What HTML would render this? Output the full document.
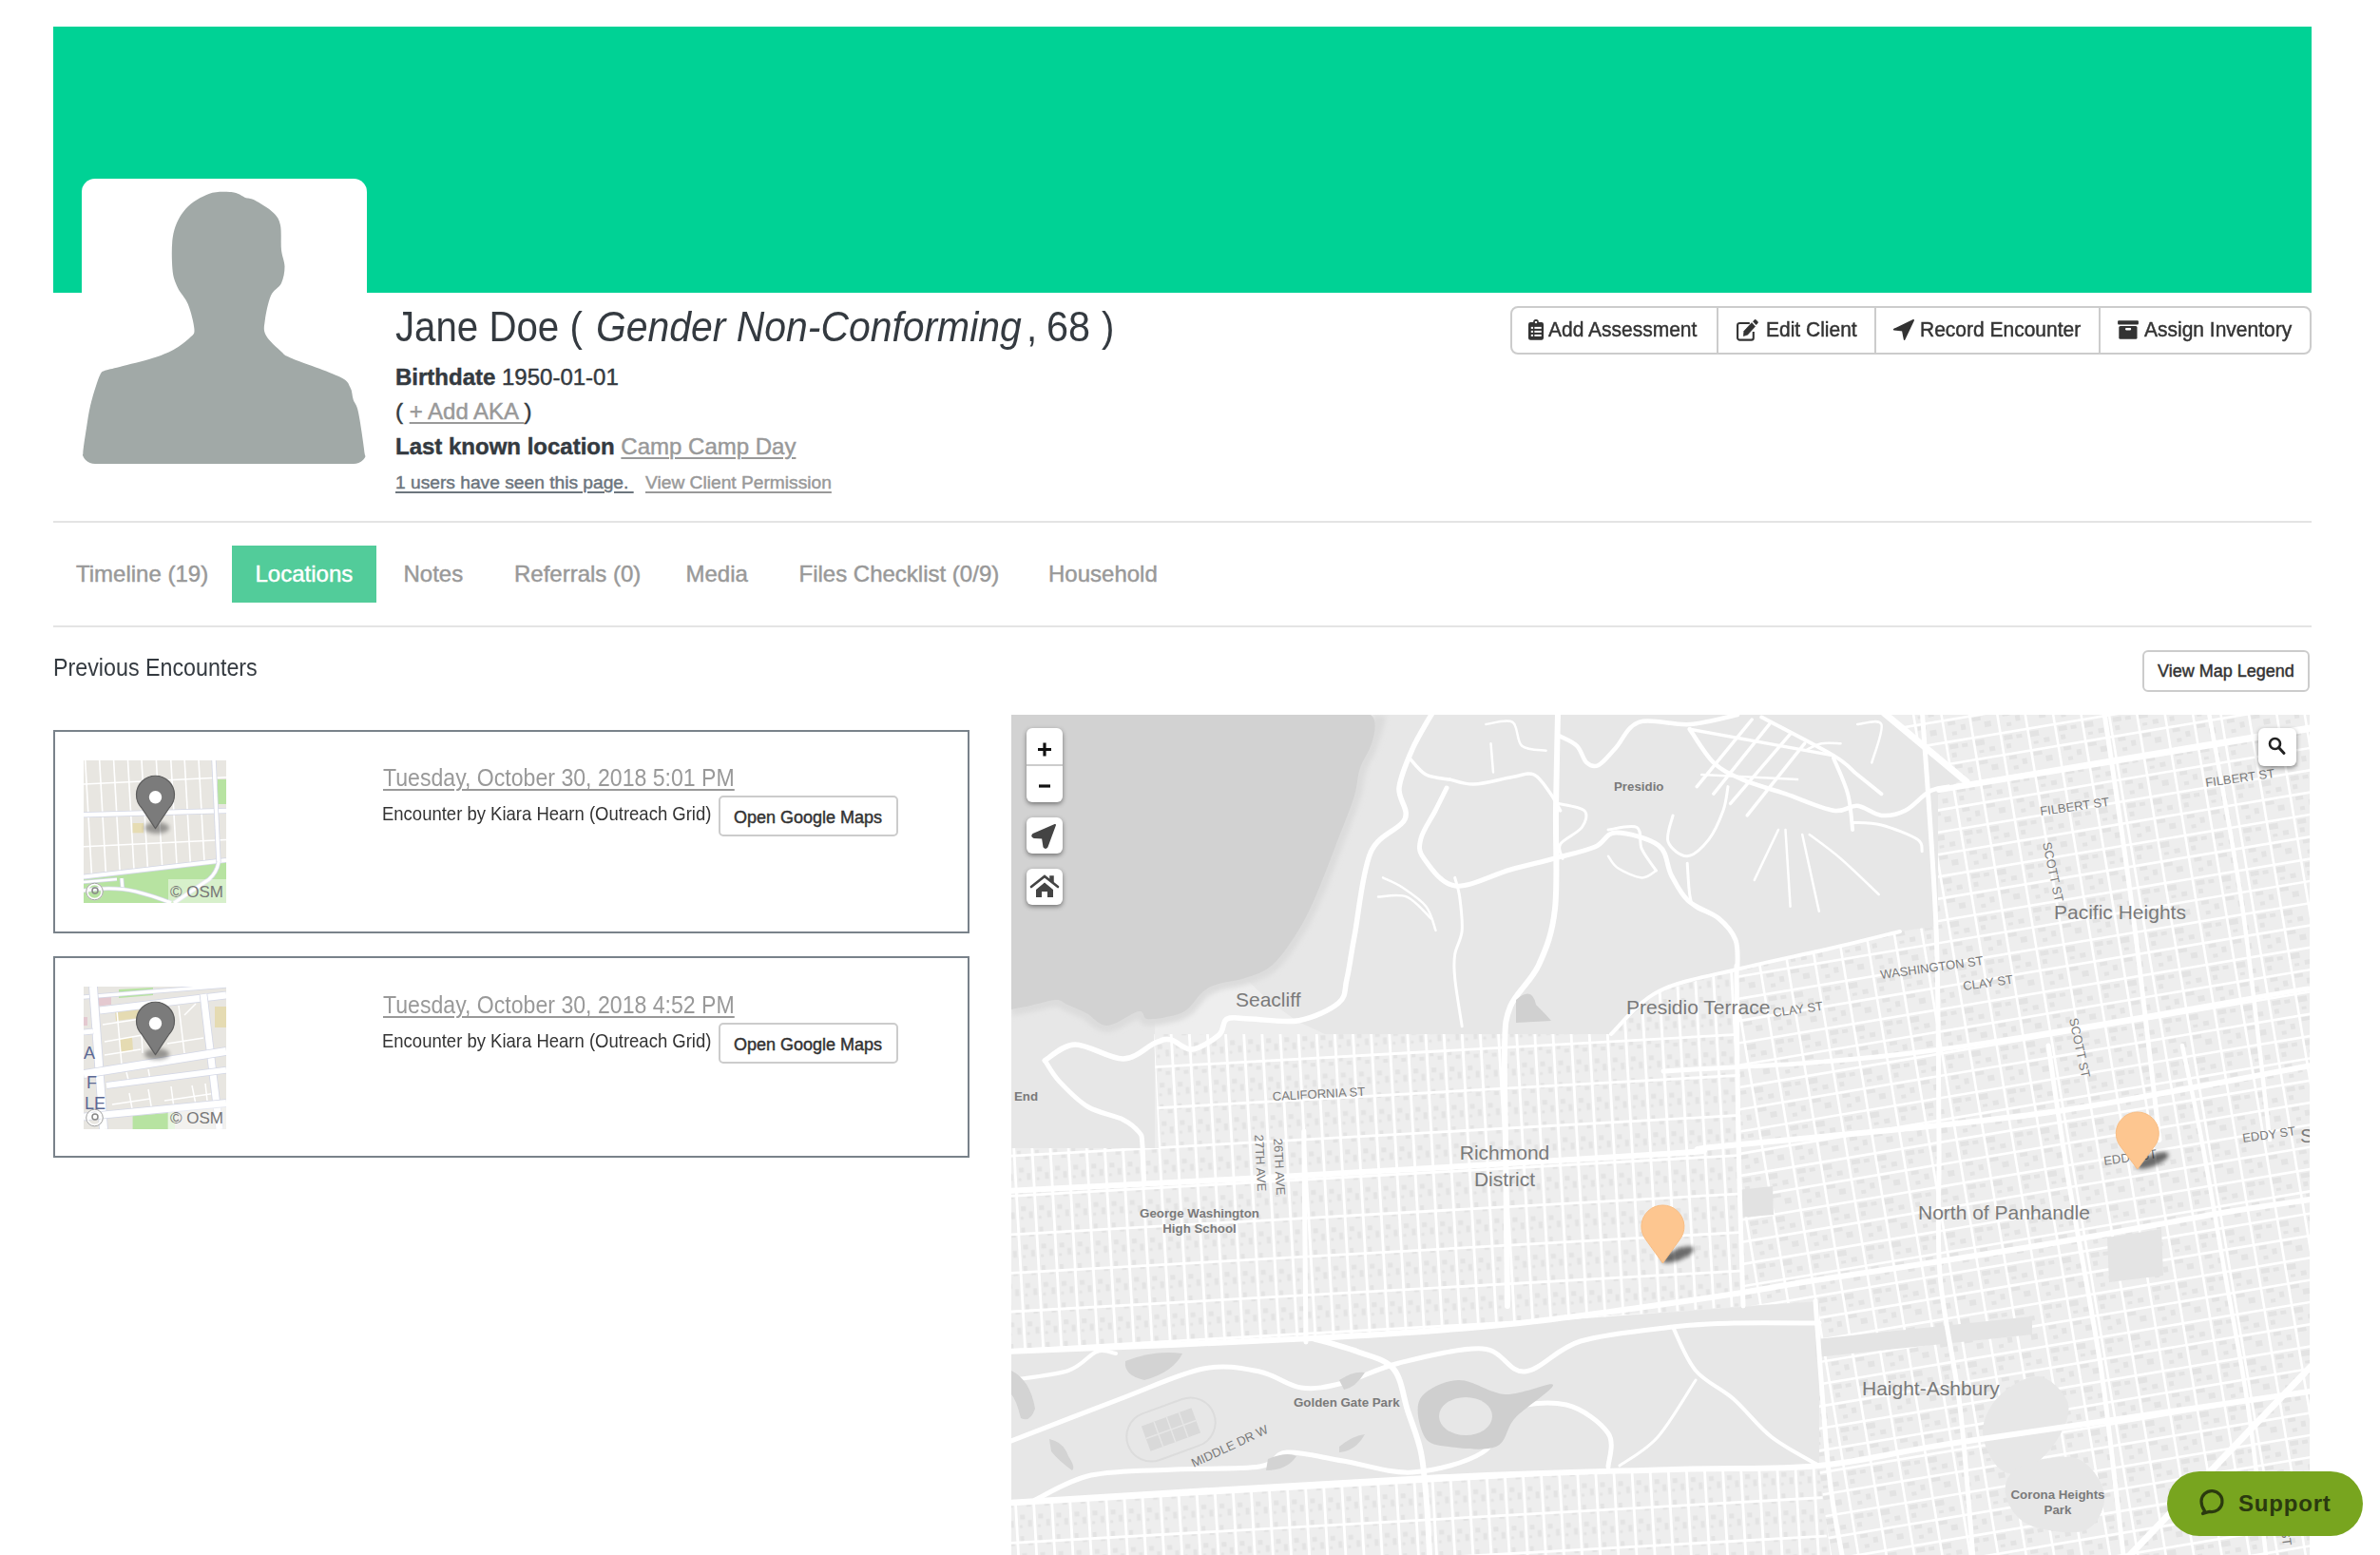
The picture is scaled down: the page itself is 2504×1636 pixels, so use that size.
<!DOCTYPE html>
<html><head><meta charset="utf-8"><style>
html,body{margin:0;padding:0;width:2504px;height:1636px;overflow:hidden;background:#fff;font-family:"Liberation Sans", sans-serif}
.a{position:absolute;box-sizing:content-box}
.t{position:absolute;white-space:nowrap}
.hv{-webkit-text-stroke:0.45px currentColor}
.ctl{background:#fff;border-radius:6px;box-shadow:0 2px 5px rgba(0,0,0,.45)}
svg text{font-family:"Liberation Sans", sans-serif}
u{text-decoration-thickness:2px;text-underline-offset:3px}
</style></head><body>
<div class="a" style="left:56px;top:28px;width:2376px;height:280px;background:#00d295"></div>
<div class="a" style="left:86px;top:188px;width:300px;height:300px;background:#fff;border-radius:14px;overflow:hidden"><svg width="300" height="300" style="display:block"><path d="M155.5,13.9 C160.7,13.9 162.2,15.0 165.0,16.0 C167.8,17.0 169.2,18.9 172.0,20.0 C174.8,21.1 176.9,20.0 181.8,22.6 C186.7,25.2 197.0,31.3 201.5,35.7 C206.0,40.1 207.6,42.5 209.0,49.0 C210.4,55.5 209.2,67.7 210.0,75.0 C210.8,82.3 213.5,86.8 213.5,92.6 C213.5,98.4 212.4,104.9 210.0,110.0 C207.6,115.1 201.9,116.4 199.0,123.0 C196.1,129.6 193.6,142.5 192.7,149.5 C191.8,156.5 190.9,159.4 193.8,164.8 C196.7,170.2 205.5,178.0 210.0,182.0 C214.5,186.0 210.8,184.6 221.0,189.0 C231.2,193.4 261.3,203.4 271.5,208.5 C281.7,213.6 280.0,215.5 282.4,219.5 C284.8,223.5 284.3,228.2 285.7,232.6 C287.1,237.0 289.0,236.2 291.0,245.7 C293.0,255.2 296.7,280.4 297.7,289.5 C298.7,298.6 321.6,298.2 297.0,300.0 C272.4,301.8 199.0,300.0 150.0,300.0 C101.0,300.0 27.8,301.8 3.0,300.0 C-21.8,298.2 1.0,295.8 1.3,289.5 C1.6,283.2 3.7,270.4 5.0,262.0 C6.3,253.6 7.3,246.3 9.0,239.0 C10.7,231.7 13.2,223.5 15.0,218.0 C16.8,212.5 18.0,208.7 19.5,206.0 C21.0,203.3 20.6,203.3 24.0,202.0 C27.4,200.7 31.6,200.2 40.0,198.0 C48.4,195.8 65.2,191.8 74.6,188.8 C84.0,185.8 89.9,183.6 96.5,180.0 C103.1,176.4 110.3,170.7 114.0,167.0 C117.7,163.3 118.8,163.8 118.4,158.0 C118.0,152.2 114.7,139.2 111.8,132.0 C108.9,124.8 103.6,120.7 100.9,114.5 C98.2,108.3 96.1,104.3 95.4,94.8 C94.7,85.3 94.1,68.2 96.5,57.6 C98.9,47.0 103.4,38.3 109.6,31.4 C115.8,24.5 126.0,18.9 133.7,16.0 C141.3,13.1 150.3,13.9 155.5,13.9 Z" fill="#a1a9a7"/></svg></div>
<div class="t " style="left:415.9px;top:323.1px;font-size:43.6px;line-height:43.6px;transform:scaleX(0.923);transform-origin:0 0;color:#343a40">Jane Doe (</div>
<div class="t " style="left:626.7px;top:323.1px;font-size:43.6px;line-height:43.6px;transform:scaleX(0.938);transform-origin:0 0;color:#343a40"><i>Gender Non-Conforming</i></div>
<div class="t " style="left:1080.3px;top:323.1px;font-size:43.6px;line-height:43.6px;transform:scaleX(0.92);transform-origin:0 0;color:#343a40">,</div>
<div class="t " style="left:1100.6px;top:323.1px;font-size:43.6px;line-height:43.6px;transform:scaleX(0.95);transform-origin:0 0;color:#343a40">68</div>
<div class="t " style="left:1158.8px;top:323.1px;font-size:43.6px;line-height:43.6px;transform:scaleX(0.92);transform-origin:0 0;color:#343a40">)</div>
<div class="t hv" style="left:416.0px;top:385.3px;font-size:24px;line-height:24px;color:#343a40"><b>Birthdate</b> 1950-01-01</div>
<div class="t hv" style="left:416.0px;top:420.7px;font-size:24px;line-height:24px;color:#343a40">( <u style="color:#999">+ Add AKA </u>)</div>
<div class="t hv" style="left:416.0px;top:457.7px;font-size:24px;line-height:24px;color:#343a40"><b>Last known location</b> <u style="color:#999">Camp Camp Day</u></div>
<div class="t hv" style="left:416.0px;top:498.3px;font-size:19.2px;line-height:19.2px;color:#6c757d"><u>1 users have seen this page.&nbsp;</u></div>
<div class="t hv" style="left:679.0px;top:498.3px;font-size:19.2px;line-height:19.2px;color:#999"><u>View Client Permission</u></div>
<div class="a" style="left:1589px;top:322px;width:839px;height:47px;border:2px solid #ccc;border-radius:8px"></div>
<div class="a" style="left:1806px;top:322px;width:2px;height:51px;background:#ccc"></div>
<div class="a" style="left:1972px;top:322px;width:2px;height:51px;background:#ccc"></div>
<div class="a" style="left:2208px;top:322px;width:2px;height:51px;background:#ccc"></div>
<div class="t hv" style="left:1629.0px;top:335.5px;font-size:21.8px;line-height:21.8px;transform:scaleX(0.963);transform-origin:0 0;color:#333">Add Assessment</div>
<div class="t hv" style="left:1857.5px;top:335.5px;font-size:21.8px;line-height:21.8px;transform:scaleX(0.963);transform-origin:0 0;color:#333">Edit Client</div>
<div class="t hv" style="left:2020.0px;top:335.5px;font-size:21.8px;line-height:21.8px;transform:scaleX(0.963);transform-origin:0 0;color:#333">Record Encounter</div>
<div class="t hv" style="left:2255.5px;top:335.5px;font-size:21.8px;line-height:21.8px;transform:scaleX(0.963);transform-origin:0 0;color:#333">Assign Inventory</div>
<svg class="a" style="left:1608px;top:336px" width="16" height="22" viewBox="0 0 16 22"><rect x="0" y="3" width="16" height="18.7" rx="2.2" fill="#333"/><rect x="5.2" y="0" width="5.6" height="6" rx="2.6" fill="#333"/><rect x="6.9" y="2" width="2.2" height="2.1" fill="#fff"/><g fill="#fff"><rect x="2.8" y="7.9" width="2.2" height="2"/><rect x="6.4" y="7.9" width="7.3" height="2"/><rect x="2.8" y="11.9" width="2.2" height="2"/><rect x="6.4" y="11.9" width="7.3" height="2"/><rect x="2.8" y="15.9" width="2.2" height="2"/><rect x="6.4" y="15.9" width="7.3" height="2"/></g></svg>
<svg class="a" style="left:1820px;top:328px" width="32" height="32" viewBox="0 0 32 32"><path d="M20.8,12 H10.4 A2.2,2.2 0 0 0 8.1,14.2 V27.4 A2.2,2.2 0 0 0 10.4,29.6 H22.6 A2.2,2.2 0 0 0 24.8,27.4 V21" fill="none" stroke="#333" stroke-width="2.1"/><polygon points="14.3,25.6 14.9,20.3 23.0,11.6 26.6,15.5 18.6,24.2" fill="#333" stroke="#333" stroke-width="0.6" stroke-linejoin="round"/><path d="M24.1,10.3 L26.0,8.3 Q26.8,7.6 27.6,8.4 L29.6,10.6 Q30.2,11.4 29.5,12.1 L27.6,14.1 Z" fill="#333"/></svg>
<svg class="a" style="left:1985px;top:328px" width="32" height="32" viewBox="0 0 32 32"><path d="M7.6,18.6 L28.2,8.8 L18.6,29.2 L16.8,19.8 Z" fill="#333" stroke="#333" stroke-width="1.6" stroke-linejoin="round"/></svg>
<svg class="a" style="left:2220px;top:328px" width="32" height="32" viewBox="0 0 32 32"><rect x="8.1" y="9.3" width="21.8" height="4.1" rx="1" fill="#333"/><rect x="9.3" y="15" width="19.2" height="13.7" rx="1.5" fill="#333"/><rect x="16" y="17.1" width="6.2" height="2.3" rx="1.1" fill="#fff"/></svg>
<div class="a" style="left:56px;top:548px;width:2376px;height:2px;background:#e4e4e4"></div>
<div class="a" style="left:56px;top:658px;width:2376px;height:2px;background:#e4e4e4"></div>
<div class="a" style="left:244px;top:574px;width:152px;height:60px;background:#52cc9a"></div>
<div class="t hv" style="left:80.0px;top:591.7px;font-size:24px;line-height:24px;color:#999">Timeline (19)</div>
<div class="t hv" style="left:268.5px;top:591.7px;font-size:24px;line-height:24px;color:#fff">Locations</div>
<div class="t hv" style="left:424.5px;top:591.7px;font-size:24px;line-height:24px;color:#999">Notes</div>
<div class="t hv" style="left:541.0px;top:591.7px;font-size:24px;line-height:24px;color:#999">Referrals (0)</div>
<div class="t hv" style="left:721.5px;top:591.7px;font-size:24px;line-height:24px;color:#999">Media</div>
<div class="t hv" style="left:840.5px;top:591.7px;font-size:24px;line-height:24px;color:#999">Files Checklist (0/9)</div>
<div class="t hv" style="left:1103.0px;top:591.7px;font-size:24px;line-height:24px;color:#999">Household</div>
<div class="t " style="left:56.3px;top:690.3px;font-size:25.3px;line-height:25.3px;transform:scaleX(0.92);transform-origin:0 0;color:#343a40">Previous Encounters</div>
<div class="a" style="left:2254px;top:684px;width:172px;height:40px;border:2px solid #ccc;border-radius:6px"></div>
<div class="t hv" style="left:2270.0px;top:696.8px;font-size:18px;line-height:18px;color:#333">View Map Legend</div>
<div class="a" style="left:56px;top:768px;width:960px;height:210px;border:2px solid #79828a"></div>
<div class="a" style="left:88px;top:800px;width:150px;height:150px;overflow:hidden;background:#e6e4e0"><svg width="150" height="150" viewBox="0 0 150 150" style="display:block"><defs><filter id="tb" x="-50%" y="-50%" width="200%" height="200%"><feGaussianBlur stdDeviation="2"/></filter></defs><rect width="150" height="150" fill="#e8e6e1"/><polygon points="0,125 150,107 150,150 0,150" fill="#b7e3a1"/><rect x="141" y="20" width="9" height="26" fill="#b7e3a1"/><line x1="1.7" y1="0" x2="8.6" y2="122.4" stroke="#fff" stroke-width="1.6"/><line x1="16.7" y1="0" x2="23.5" y2="120.6" stroke="#fff" stroke-width="1.6"/><line x1="31.6" y1="0" x2="38.3" y2="118.9" stroke="#fff" stroke-width="1.6"/><line x1="46.5" y1="0" x2="53.1" y2="117.1" stroke="#fff" stroke-width="1.6"/><line x1="61" y1="0" x2="67.5" y2="115.4" stroke="#fff" stroke-width="1.6"/><line x1="76.4" y1="0" x2="82.8" y2="113.6" stroke="#fff" stroke-width="1.6"/><line x1="91.8" y1="0" x2="98.1" y2="111.8" stroke="#fff" stroke-width="1.6"/><line x1="106.2" y1="0" x2="112.4" y2="110.1" stroke="#fff" stroke-width="1.6"/><line x1="121" y1="0" x2="127.1" y2="108.4" stroke="#fff" stroke-width="1.6"/><line x1="0" y1="25" x2="150" y2="17.7" stroke="#fff" stroke-width="1.6"/><line x1="0" y1="90.7" x2="150" y2="83.5" stroke="#fff" stroke-width="1.6"/><path d="M0,57.3 L150,53" fill="none" stroke="#d3d7e6" stroke-width="6.0" stroke-linecap="butt"/><path d="M0,57.3 L150,53" fill="none" stroke="#fff" stroke-width="4.4" stroke-linecap="butt"/><path d="M0,122.6 L150,105" fill="none" stroke="#d3d7e6" stroke-width="5.6" stroke-linecap="butt"/><path d="M0,122.6 L150,105" fill="none" stroke="#fff" stroke-width="4" stroke-linecap="butt"/><path d="M137,0 L142,107" fill="none" stroke="#d3d7e6" stroke-width="5.2" stroke-linecap="butt"/><path d="M137,0 L142,107" fill="none" stroke="#fff" stroke-width="3.6" stroke-linecap="butt"/><path d="M142,107 Q140,118 132,125 L95,150" fill="none" stroke="#d3d7e6" stroke-width="4.800000000000001" stroke-linecap="butt"/><path d="M142,107 Q140,118 132,125 L95,150" fill="none" stroke="#fff" stroke-width="3.2" stroke-linecap="butt"/><path d="M0,128 L35,125" fill="none" stroke="#d3d7e6" stroke-width="4.1" stroke-linecap="butt"/><path d="M0,128 L35,125" fill="none" stroke="#fff" stroke-width="2.5" stroke-linecap="butt"/><path d="M40,124 L41,136" fill="none" stroke="#d3d7e6" stroke-width="4.6" stroke-linecap="butt"/><path d="M40,124 L41,136" fill="none" stroke="#fff" stroke-width="3" stroke-linecap="butt"/><path d="M0,137 Q30,132 55,138 Q75,143 92,150" fill="none" stroke="#d3d7e6" stroke-width="4.6" stroke-linecap="butt"/><path d="M0,137 Q30,132 55,138 Q75,143 92,150" fill="none" stroke="#fff" stroke-width="3" stroke-linecap="butt"/><rect x="51.6" y="66" width="11.4" height="10.3" fill="#e6dcb3"/><ellipse cx="77" cy="71" rx="13" ry="6" fill="#000" opacity="0.35" filter="url(#tb)"/><path d="M75.5,71.7 L61,50 A20,20 0 1 1 90,50 Z" fill="#7b7b7b" stroke="#5c5c5c" stroke-width="1.2" stroke-linejoin="round"/><circle cx="75.5" cy="38.8" r="6.7" fill="#fff"/><rect x="89" y="125" width="61" height="25" fill="#fff" opacity="0.45"/><text x="91" y="143.5" font-size="17" fill="#777" font-family="Liberation Sans, sans-serif">© OSM</text><circle cx="11.5" cy="138" r="8" fill="none" stroke="#fff" stroke-width="2.5"/><circle cx="11.5" cy="138" r="8.8" fill="none" stroke="#888" stroke-width="0.8"/><circle cx="12" cy="137" r="3" fill="none" stroke="#888" stroke-width="1.5"/></svg></div>
<div class="t " style="left:403.0px;top:806.2px;font-size:25.3px;line-height:25.3px;transform:scaleX(0.913);transform-origin:0 0;color:#999"><u>Tuesday, October 30, 2018 5:01 PM</u></div>
<div class="t " style="left:402.1px;top:847.0px;font-size:19.8px;line-height:19.8px;transform:scaleX(0.935);transform-origin:0 0;color:#333">Encounter by Kiara Hearn (Outreach Grid)</div>
<div class="a" style="left:756px;top:836.6px;width:185px;height:39px;border:2px solid #ccc;border-radius:5px"></div>
<div class="t hv" style="left:772.0px;top:850.8px;font-size:18px;line-height:18px;color:#333">Open Google Maps</div>
<div class="a" style="left:56px;top:1006px;width:960px;height:208px;border:2px solid #79828a"></div>
<div class="a" style="left:88px;top:1038px;width:150px;height:150px;overflow:hidden;background:#e6e4e0"><svg width="150" height="150" viewBox="0 0 150 150" style="display:block"><defs><filter id="tb2" x="-50%" y="-50%" width="200%" height="200%"><feGaussianBlur stdDeviation="2"/></filter></defs><rect width="150" height="150" fill="#e8e6e1"/><polygon points="9.5,9 29,7 29,19 11,21" fill="#e4c9d0"/><rect x="0" y="32" width="4" height="9" fill="#e4c9d0"/><polygon points="37,3 73,1 73,9 37,12" fill="#b7e3a1"/><polygon points="33,25 58,21 58,33 34,36" fill="#e5dbb2"/><polygon points="38,55 51,53 52,67 39,69" fill="#e5dbb2"/><rect x="138" y="21" width="12" height="22" fill="#e5dbb2"/><polygon points="51.6,136 88.7,133 88.7,150 51.6,150" fill="#b7e3a1"/><polygon points="88.7,133 96,132 96,150 88.7,150" fill="#d4efc6"/><line x1="20" y1="40" x2="60" y2="34" stroke="#fff" stroke-width="1.5"/><line x1="22" y1="58" x2="62" y2="51" stroke="#fff" stroke-width="1.5"/><line x1="22" y1="72" x2="60" y2="66" stroke="#fff" stroke-width="1.5"/><line x1="35" y1="25" x2="40" y2="82" stroke="#fff" stroke-width="1.5"/><line x1="60" y1="30" x2="62" y2="70" stroke="#fff" stroke-width="1.5"/><line x1="100" y1="20" x2="106" y2="70" stroke="#fff" stroke-width="1.5"/><line x1="88" y1="60" x2="126" y2="54" stroke="#fff" stroke-width="1.5"/><line x1="100" y1="96" x2="128" y2="92" stroke="#fff" stroke-width="1.5"/><line x1="45" y1="90" x2="48" y2="102" stroke="#fff" stroke-width="1.5"/><line x1="68" y1="87" x2="70" y2="98" stroke="#fff" stroke-width="1.5"/><line x1="85" y1="120" x2="140" y2="112" stroke="#fff" stroke-width="1.5"/><line x1="30" y1="124" x2="70" y2="118" stroke="#fff" stroke-width="1.5"/><line x1="48" y1="112" x2="52" y2="134" stroke="#fff" stroke-width="1.5"/><line x1="68" y1="108" x2="72" y2="131" stroke="#fff" stroke-width="1.5"/><line x1="92" y1="105" x2="95" y2="128" stroke="#fff" stroke-width="1.5"/><line x1="114" y1="104" x2="118" y2="124" stroke="#fff" stroke-width="1.5"/><line x1="128" y1="102" x2="130" y2="120" stroke="#fff" stroke-width="1.5"/><line x1="106" y1="30" x2="118" y2="18" stroke="#fff" stroke-width="1.5"/><path d="M0,11 L150,-1" fill="none" stroke="#d3d7e6" stroke-width="5.1" stroke-linecap="butt"/><path d="M0,11 L150,-1" fill="none" stroke="#fff" stroke-width="3.5" stroke-linecap="butt"/><path d="M17,25 L124.7,12 L150,9" fill="none" stroke="#d3d7e6" stroke-width="8.6" stroke-linecap="butt"/><path d="M17,25 L124.7,12 L150,9" fill="none" stroke="#fff" stroke-width="7" stroke-linecap="butt"/><path d="M10,0 L21,150" fill="none" stroke="#d3d7e6" stroke-width="9.6" stroke-linecap="butt"/><path d="M10,0 L21,150" fill="none" stroke="#fff" stroke-width="8" stroke-linecap="butt"/><path d="M126,8 L143,150" fill="none" stroke="#d3d7e6" stroke-width="8.6" stroke-linecap="butt"/><path d="M126,8 L143,150" fill="none" stroke="#fff" stroke-width="7" stroke-linecap="butt"/><path d="M0,92 L150,68" fill="none" stroke="#d3d7e6" stroke-width="9.6" stroke-linecap="butt"/><path d="M0,92 L150,68" fill="none" stroke="#fff" stroke-width="8" stroke-linecap="butt"/><path d="M24,104 L150,87.7" fill="none" stroke="#d3d7e6" stroke-width="7.6" stroke-linecap="butt"/><path d="M24,104 L150,87.7" fill="none" stroke="#fff" stroke-width="6" stroke-linecap="butt"/><path d="M0,137 L150,122.6" fill="none" stroke="#d3d7e6" stroke-width="8.6" stroke-linecap="butt"/><path d="M0,137 L150,122.6" fill="none" stroke="#fff" stroke-width="7" stroke-linecap="butt"/><path d="M0,48 L10,47" fill="none" stroke="#d3d7e6" stroke-width="6.6" stroke-linecap="butt"/><path d="M0,48 L10,47" fill="none" stroke="#fff" stroke-width="5" stroke-linecap="butt"/><text x="0" y="76" font-size="18" fill="#5b6894" font-family="Liberation Sans, sans-serif">A</text><text x="3" y="107" font-size="18" fill="#5b6894" font-family="Liberation Sans, sans-serif">F</text><text x="1" y="129" font-size="18" fill="#5b6894" font-family="Liberation Sans, sans-serif">LE</text><ellipse cx="77" cy="71" rx="13" ry="6" fill="#000" opacity="0.35" filter="url(#tb2)"/><path d="M75.5,71.7 L61,50 A20,20 0 1 1 90,50 Z" fill="#7b7b7b" stroke="#5c5c5c" stroke-width="1.2" stroke-linejoin="round"/><circle cx="75.5" cy="38.8" r="6.7" fill="#fff"/><rect x="89" y="125" width="61" height="25" fill="#fff" opacity="0.45"/><text x="91" y="143.5" font-size="17" fill="#777" font-family="Liberation Sans, sans-serif">© OSM</text><circle cx="11.5" cy="138" r="8" fill="none" stroke="#fff" stroke-width="2.5"/><circle cx="11.5" cy="138" r="8.8" fill="none" stroke="#888" stroke-width="0.8"/><circle cx="12" cy="137" r="3" fill="none" stroke="#888" stroke-width="1.5"/></svg></div>
<div class="t " style="left:403.0px;top:1045.1px;font-size:25.3px;line-height:25.3px;transform:scaleX(0.913);transform-origin:0 0;color:#999"><u>Tuesday, October 30, 2018 4:52 PM</u></div>
<div class="t " style="left:402.1px;top:1085.9px;font-size:19.8px;line-height:19.8px;transform:scaleX(0.935);transform-origin:0 0;color:#333">Encounter by Kiara Hearn (Outreach Grid)</div>
<div class="a" style="left:756px;top:1075.5px;width:185px;height:39px;border:2px solid #ccc;border-radius:5px"></div>
<div class="t hv" style="left:772.0px;top:1089.7px;font-size:18px;line-height:18px;color:#333">Open Google Maps</div>
<svg class="a" style="left:1064px;top:752px" width="1366" height="884" viewBox="0 0 1366 884">
<defs>
<clipPath id="cA"><polygon points="150.0,336.0 631.0,336.0 681.0,291.0 765.0,268.0 770.0,622.0 525.0,641.0 317.0,656.0 -4.0,670.0 0.0,671.0 0.0,456.0 155.0,456.0"/><polygon points="0.0,828.0 437.0,802.0 720.0,794.0 850.0,790.0 860.0,884.0 0.0,884.0"/></clipPath>
<clipPath id="cB"><polygon points="765.0,268.0 861.0,246.0 935.0,228.0 975.0,222.0 975.0,84.0 1001.0,68.0 924.0,0.0 1366.0,0.0 1366.0,884.0 862.0,884.0 850.0,792.0 850.0,617.0 770.0,622.0"/></clipPath>
<filter id="sh" x="-50%" y="-50%" width="200%" height="200%"><feGaussianBlur stdDeviation="2.2"/></filter>
<filter id="cb" x="-10%" y="-10%" width="120%" height="120%"><feGaussianBlur stdDeviation="2.5"/></filter>
<pattern id="pA" patternUnits="userSpaceOnUse" width="19.1" height="40.5" patternTransform="translate(307.8,438) rotate(-3.2)">
<rect x="3" y="4" width="4" height="6" fill="#e3e3e3"/>
<rect x="11" y="10" width="5" height="4" fill="#e3e3e3"/>
<rect x="4" y="22" width="5" height="5" fill="#e3e3e3"/>
<rect x="12" y="28" width="4" height="7" fill="#e3e3e3"/>
<rect x="3" y="33" width="3" height="3" fill="#e3e3e3"/>
</pattern>
<pattern id="pB" patternUnits="userSpaceOnUse" width="58" height="46" patternTransform="translate(1071,201) rotate(-9.5)">
<rect x="3" y="3" width="9" height="5" fill="#e3e3e3"/>
<rect x="16" y="4" width="6" height="4" fill="#e3e3e3"/>
<rect x="4" y="12" width="5" height="5" fill="#e3e3e3"/>
<rect x="30" y="3" width="10" height="6" fill="#e3e3e3"/>
<rect x="44" y="12" width="6" height="5" fill="#e3e3e3"/>
<rect x="33" y="14" width="5" height="3" fill="#e3e3e3"/>
<rect x="5" y="25" width="8" height="4" fill="#e3e3e3"/>
<rect x="18" y="30" width="5" height="6" fill="#e3e3e3"/>
<rect x="31" y="25" width="9" height="4" fill="#e3e3e3"/>
<rect x="43" y="31" width="7" height="6" fill="#e3e3e3"/>
<rect x="8" y="36" width="5" height="4" fill="#e3e3e3"/>
</pattern>
</defs>
<rect width="1366" height="884" fill="#eeeeee"/>
<rect width="1366" height="884" fill="url(#pA)" clip-path="url(#cA)"/>
<rect width="1366" height="884" fill="url(#pB)" clip-path="url(#cB)"/>
<polygon points="918.0,0.0 1000.0,68.0 975.0,84.0 975.0,222.0 935.0,228.0 861.0,246.0 767.0,267.0 681.0,291.0 631.0,336.0 330.0,336.0 300.0,322.0 270.0,300.0 246.0,277.0 275.0,263.0 302.0,227.0 321.0,189.0 343.0,133.0 360.7,86.0 366.6,57.0 378.0,33.0 388.0,0.0" fill="#e7e7e7"/>
<polygon points="0.0,300.0 151.0,300.0 151.0,456.0 0.0,456.0" fill="#e7e7e7"/>
<polygon points="0.0,672.0 317.0,656.0 525.0,641.0 850.0,617.0 850.0,792.0 437.0,803.0 0.0,829.0" fill="#e7e7e7"/>
<g clip-path="url(#cA)"><g transform="translate(307.8,438) rotate(-3.2)" stroke="#ffffff" stroke-width="2.8">
<line x1="-382.0" y1="-300" x2="-382.0" y2="700"/>
<line x1="-362.9" y1="-300" x2="-362.9" y2="700"/>
<line x1="-343.8" y1="-300" x2="-343.8" y2="700"/>
<line x1="-324.7" y1="-300" x2="-324.7" y2="700"/>
<line x1="-305.6" y1="-300" x2="-305.6" y2="700"/>
<line x1="-286.5" y1="-300" x2="-286.5" y2="700"/>
<line x1="-267.4" y1="-300" x2="-267.4" y2="700"/>
<line x1="-248.3" y1="-300" x2="-248.3" y2="700"/>
<line x1="-229.2" y1="-300" x2="-229.2" y2="700"/>
<line x1="-210.1" y1="-300" x2="-210.1" y2="700"/>
<line x1="-191.0" y1="-300" x2="-191.0" y2="700"/>
<line x1="-171.9" y1="-300" x2="-171.9" y2="700"/>
<line x1="-152.8" y1="-300" x2="-152.8" y2="700"/>
<line x1="-133.7" y1="-300" x2="-133.7" y2="700"/>
<line x1="-114.6" y1="-300" x2="-114.6" y2="700"/>
<line x1="-95.5" y1="-300" x2="-95.5" y2="700"/>
<line x1="-76.4" y1="-300" x2="-76.4" y2="700"/>
<line x1="-57.3" y1="-300" x2="-57.3" y2="700"/>
<line x1="-38.2" y1="-300" x2="-38.2" y2="700"/>
<line x1="-19.1" y1="-300" x2="-19.1" y2="700"/>
<line x1="0.0" y1="-300" x2="0.0" y2="700"/>
<line x1="19.1" y1="-300" x2="19.1" y2="700"/>
<line x1="38.2" y1="-300" x2="38.2" y2="700"/>
<line x1="57.3" y1="-300" x2="57.3" y2="700"/>
<line x1="76.4" y1="-300" x2="76.4" y2="700"/>
<line x1="95.5" y1="-300" x2="95.5" y2="700"/>
<line x1="114.6" y1="-300" x2="114.6" y2="700"/>
<line x1="133.7" y1="-300" x2="133.7" y2="700"/>
<line x1="152.8" y1="-300" x2="152.8" y2="700"/>
<line x1="171.9" y1="-300" x2="171.9" y2="700"/>
<line x1="191.0" y1="-300" x2="191.0" y2="700"/>
<line x1="210.1" y1="-300" x2="210.1" y2="700"/>
<line x1="229.2" y1="-300" x2="229.2" y2="700"/>
<line x1="248.3" y1="-300" x2="248.3" y2="700"/>
<line x1="267.4" y1="-300" x2="267.4" y2="700"/>
<line x1="286.5" y1="-300" x2="286.5" y2="700"/>
<line x1="305.6" y1="-300" x2="305.6" y2="700"/>
<line x1="324.7" y1="-300" x2="324.7" y2="700"/>
<line x1="343.8" y1="-300" x2="343.8" y2="700"/>
<line x1="362.9" y1="-300" x2="362.9" y2="700"/>
<line x1="382.0" y1="-300" x2="382.0" y2="700"/>
<line x1="401.1" y1="-300" x2="401.1" y2="700"/>
<line x1="420.2" y1="-300" x2="420.2" y2="700"/>
<line x1="439.3" y1="-300" x2="439.3" y2="700"/>
<line x1="458.4" y1="-300" x2="458.4" y2="700"/>
<line x1="477.5" y1="-300" x2="477.5" y2="700"/>
<line x1="496.6" y1="-300" x2="496.6" y2="700"/>
<line x1="515.7" y1="-300" x2="515.7" y2="700"/>
<line x1="534.8" y1="-300" x2="534.8" y2="700"/>
<line x1="553.9" y1="-300" x2="553.9" y2="700"/>
<line x1="-500" y1="-76.0" x2="900" y2="-76.0"/>
<line x1="-500" y1="-33.0" x2="900" y2="-33.0"/>
<line x1="-500" y1="9.0" x2="900" y2="9.0"/>
<line x1="-500" y1="51.0" x2="900" y2="51.0"/>
<line x1="-500" y1="91.5" x2="900" y2="91.5"/>
<line x1="-500" y1="132.0" x2="900" y2="132.0"/>
<line x1="-500" y1="172.5" x2="900" y2="172.5"/>
<line x1="-500" y1="213.0" x2="900" y2="213.0"/>
<line x1="-500" y1="253.5" x2="900" y2="253.5"/>
<line x1="-500" y1="294.0" x2="900" y2="294.0"/>
<line x1="-500" y1="334.5" x2="900" y2="334.5"/>
<line x1="-500" y1="375.0" x2="900" y2="375.0"/>
<line x1="-500" y1="415.5" x2="900" y2="415.5"/>
<line x1="-500" y1="456.0" x2="900" y2="456.0"/>
<line x1="-500" y1="496.5" x2="900" y2="496.5"/>
</g></g>
<g clip-path="url(#cB)"><g transform="translate(1071,201) rotate(-9.5)" stroke="#ffffff" stroke-width="2.6">
<line x1="-406.0" y1="-500" x2="-406.0" y2="900"/>
<line x1="-377.0" y1="-500" x2="-377.0" y2="900"/>
<line x1="-348.0" y1="-500" x2="-348.0" y2="900"/>
<line x1="-319.0" y1="-500" x2="-319.0" y2="900"/>
<line x1="-290.0" y1="-500" x2="-290.0" y2="900"/>
<line x1="-261.0" y1="-500" x2="-261.0" y2="900"/>
<line x1="-232.0" y1="-500" x2="-232.0" y2="900"/>
<line x1="-203.0" y1="-500" x2="-203.0" y2="900"/>
<line x1="-174.0" y1="-500" x2="-174.0" y2="900"/>
<line x1="-145.0" y1="-500" x2="-145.0" y2="900"/>
<line x1="-116.0" y1="-500" x2="-116.0" y2="900"/>
<line x1="-87.0" y1="-500" x2="-87.0" y2="900"/>
<line x1="-58.0" y1="-500" x2="-58.0" y2="900"/>
<line x1="-29.0" y1="-500" x2="-29.0" y2="900"/>
<line x1="0.0" y1="-500" x2="0.0" y2="900"/>
<line x1="29.0" y1="-500" x2="29.0" y2="900"/>
<line x1="58.0" y1="-500" x2="58.0" y2="900"/>
<line x1="87.0" y1="-500" x2="87.0" y2="900"/>
<line x1="116.0" y1="-500" x2="116.0" y2="900"/>
<line x1="145.0" y1="-500" x2="145.0" y2="900"/>
<line x1="174.0" y1="-500" x2="174.0" y2="900"/>
<line x1="203.0" y1="-500" x2="203.0" y2="900"/>
<line x1="232.0" y1="-500" x2="232.0" y2="900"/>
<line x1="261.0" y1="-500" x2="261.0" y2="900"/>
<line x1="290.0" y1="-500" x2="290.0" y2="900"/>
<line x1="319.0" y1="-500" x2="319.0" y2="900"/>
<line x1="348.0" y1="-500" x2="348.0" y2="900"/>
<line x1="377.0" y1="-500" x2="377.0" y2="900"/>
<line x1="-600" y1="-368.0" x2="700" y2="-368.0"/>
<line x1="-600" y1="-345.0" x2="700" y2="-345.0"/>
<line x1="-600" y1="-322.0" x2="700" y2="-322.0"/>
<line x1="-600" y1="-299.0" x2="700" y2="-299.0"/>
<line x1="-600" y1="-276.0" x2="700" y2="-276.0"/>
<line x1="-600" y1="-253.0" x2="700" y2="-253.0"/>
<line x1="-600" y1="-230.0" x2="700" y2="-230.0"/>
<line x1="-600" y1="-207.0" x2="700" y2="-207.0"/>
<line x1="-600" y1="-184.0" x2="700" y2="-184.0"/>
<line x1="-600" y1="-161.0" x2="700" y2="-161.0"/>
<line x1="-600" y1="-138.0" x2="700" y2="-138.0"/>
<line x1="-600" y1="-115.0" x2="700" y2="-115.0"/>
<line x1="-600" y1="-92.0" x2="700" y2="-92.0"/>
<line x1="-600" y1="-69.0" x2="700" y2="-69.0"/>
<line x1="-600" y1="-46.0" x2="700" y2="-46.0"/>
<line x1="-600" y1="-23.0" x2="700" y2="-23.0"/>
<line x1="-600" y1="0.0" x2="700" y2="0.0"/>
<line x1="-600" y1="23.0" x2="700" y2="23.0"/>
<line x1="-600" y1="46.0" x2="700" y2="46.0"/>
<line x1="-600" y1="69.0" x2="700" y2="69.0"/>
<line x1="-600" y1="92.0" x2="700" y2="92.0"/>
<line x1="-600" y1="115.0" x2="700" y2="115.0"/>
<line x1="-600" y1="138.0" x2="700" y2="138.0"/>
<line x1="-600" y1="161.0" x2="700" y2="161.0"/>
<line x1="-600" y1="184.0" x2="700" y2="184.0"/>
<line x1="-600" y1="207.0" x2="700" y2="207.0"/>
<line x1="-600" y1="230.0" x2="700" y2="230.0"/>
<line x1="-600" y1="253.0" x2="700" y2="253.0"/>
<line x1="-600" y1="276.0" x2="700" y2="276.0"/>
<line x1="-600" y1="299.0" x2="700" y2="299.0"/>
<line x1="-600" y1="322.0" x2="700" y2="322.0"/>
<line x1="-600" y1="345.0" x2="700" y2="345.0"/>
<line x1="-600" y1="368.0" x2="700" y2="368.0"/>
<line x1="-600" y1="391.0" x2="700" y2="391.0"/>
<line x1="-600" y1="414.0" x2="700" y2="414.0"/>
<line x1="-600" y1="437.0" x2="700" y2="437.0"/>
<line x1="-600" y1="460.0" x2="700" y2="460.0"/>
<line x1="-600" y1="483.0" x2="700" y2="483.0"/>
<line x1="-600" y1="506.0" x2="700" y2="506.0"/>
<line x1="-600" y1="529.0" x2="700" y2="529.0"/>
<line x1="-600" y1="552.0" x2="700" y2="552.0"/>
<line x1="-600" y1="575.0" x2="700" y2="575.0"/>
<line x1="-600" y1="598.0" x2="700" y2="598.0"/>
<line x1="-600" y1="621.0" x2="700" y2="621.0"/>
<line x1="-600" y1="644.0" x2="700" y2="644.0"/>
<line x1="-600" y1="667.0" x2="700" y2="667.0"/>
<line x1="-600" y1="690.0" x2="700" y2="690.0"/>
<line x1="-600" y1="713.0" x2="700" y2="713.0"/>
<line x1="-600" y1="736.0" x2="700" y2="736.0"/>
<line x1="-600" y1="759.0" x2="700" y2="759.0"/>
<line x1="-600" y1="782.0" x2="700" y2="782.0"/>
<line x1="-600" y1="805.0" x2="700" y2="805.0"/>
</g></g>
<path d="M1080.6,696.0 C1092.7,697.1 1108.2,712.8 1111.6,723.7 C1115.0,734.6 1108.4,749.6 1101.0,761.6 C1093.6,773.6 1077.3,790.8 1067.0,796.0 C1056.7,801.2 1046.5,799.5 1039.0,792.6 C1031.5,785.7 1022.0,767.3 1022.0,754.7 C1022.0,742.1 1029.2,726.8 1039.0,717.0 C1048.8,707.2 1068.5,694.9 1080.6,696.0 Z" fill="#e7e7e7"/>
<path d="M1060.0,792.0 C1072.3,785.7 1105.0,777.3 1120.0,782.0 C1135.0,786.7 1148.3,807.3 1150.0,820.0 C1151.7,832.7 1143.3,852.7 1130.0,858.0 C1116.7,863.3 1084.0,858.3 1070.0,852.0 C1056.0,845.7 1047.7,830.0 1046.0,820.0 C1044.3,810.0 1047.7,798.3 1060.0,792.0 Z" fill="#e7e7e7"/>
<polygon points="846,657 1074,633 1074,652 846,676" fill="#e4e4e4"/>
<polygon points="1153,550 1210,541 1212,590 1155,597" fill="#e4e4e4"/>
<polygon points="764,500 801,496 802,526 765,529" fill="#e2e2e2"/>
<path d="M388.0,0.0 C386.3,5.5 381.6,23.5 378.0,33.0 C374.4,42.5 369.5,48.2 366.6,57.0 C363.7,65.8 364.6,73.3 360.7,86.0 C356.8,98.7 349.6,115.8 343.0,133.0 C336.4,150.2 327.8,173.3 321.0,189.0 C314.2,204.7 309.7,214.7 302.0,227.0 C294.3,239.3 284.3,254.7 275.0,263.0 C265.7,271.3 255.4,273.7 246.0,277.0 C236.6,280.3 225.8,280.7 218.5,283.0 C211.2,285.3 207.6,286.5 202.0,291.0 C196.4,295.5 190.7,305.7 185.0,310.0 C179.3,314.3 175.0,315.3 168.0,317.0 C161.0,318.7 148.7,320.8 143.0,320.0 C137.3,319.2 141.0,310.8 134.0,312.0 C127.0,313.2 110.2,326.7 101.0,327.0 C91.8,327.3 86.0,317.7 79.0,314.0 C72.0,310.3 64.3,307.3 59.0,305.0 C53.7,302.7 53.5,299.8 47.0,300.0 C40.5,300.2 27.8,304.3 20.0,306.0 C12.2,307.7 3.3,309.3 0.0,310.0" fill="none" stroke="#dcdcdc" stroke-width="14" filter="url(#cb)"/>
<path d="M0,0 L378,0 C386.3,5.5 381.6,23.5 378.0,33.0 C374.4,42.5 369.5,48.2 366.6,57.0 C363.7,65.8 364.6,73.3 360.7,86.0 C356.8,98.7 349.6,115.8 343.0,133.0 C336.4,150.2 327.8,173.3 321.0,189.0 C314.2,204.7 309.7,214.7 302.0,227.0 C294.3,239.3 284.3,254.7 275.0,263.0 C265.7,271.3 255.4,273.7 246.0,277.0 C236.6,280.3 225.8,280.7 218.5,283.0 C211.2,285.3 207.6,286.5 202.0,291.0 C196.4,295.5 190.7,305.7 185.0,310.0 C179.3,314.3 175.0,315.3 168.0,317.0 C161.0,318.7 148.7,320.8 143.0,320.0 C137.3,319.2 141.0,310.8 134.0,312.0 C127.0,313.2 110.2,326.7 101.0,327.0 C91.8,327.3 86.0,317.7 79.0,314.0 C72.0,310.3 64.3,307.3 59.0,305.0 C53.7,302.7 53.5,299.8 47.0,300.0 C40.5,300.2 27.8,304.3 20.0,306.0 C12.2,307.7 3.3,309.3 0.0,310.0 L0,310 Z" fill="#d2d2d2"/>
<path d="M35.3,363.7 C40.6,360.9 53.5,347.2 67.2,346.9 C80.9,346.6 103.6,362.3 117.6,362.0 C131.6,361.7 142.9,348.6 151.3,345.2 C159.7,341.8 161.6,340.8 168.0,341.9 C174.4,343.0 181.6,352.9 190.0,352.0 C198.4,351.1 212.3,342.1 218.5,336.8 C224.7,331.5 221.4,322.8 227.0,320.0 C232.6,317.2 239.4,319.7 252.0,320.0 C264.6,320.3 287.1,324.5 302.5,321.7 C317.9,318.9 336.1,310.3 344.5,303.0 C352.9,295.7 350.2,289.7 353.0,278.0 C355.8,266.3 356.8,255.2 361.0,233.0 C365.2,210.8 369.2,165.5 378.0,145.0 C386.8,124.5 409.0,121.3 414.0,110.0 C419.0,98.7 406.7,89.3 408.0,77.0 C409.3,64.7 416.2,49.2 422.0,36.0 C427.8,22.8 439.5,4.3 443.0,-2.0" fill="none" stroke="#ffffff" stroke-width="5.5" stroke-linecap="round" stroke-linejoin="round"/>
<path d="M458.0,77.0 C456.0,81.0 450.5,92.2 446.0,101.0 C441.5,109.8 433.0,121.7 431.0,130.0 C429.0,138.3 428.0,142.7 434.0,151.0 C440.0,159.3 451.8,178.0 467.0,180.0 C482.2,182.0 507.5,167.8 525.0,163.0 C542.5,158.2 557.2,155.0 572.0,151.0 C586.8,147.0 603.3,143.5 614.0,139.0 C624.7,134.5 624.8,124.2 636.0,124.0 C647.2,123.8 671.2,130.0 681.0,137.5 C690.8,145.0 689.2,159.2 694.5,169.0 C699.8,178.8 704.2,188.5 712.5,196.0 C720.8,203.5 735.8,207.2 744.0,214.0 C752.2,220.8 758.7,228.3 762.0,237.0 C765.3,245.7 763.7,261.2 764.0,266.0" fill="none" stroke="#ffffff" stroke-width="5" stroke-linecap="round" stroke-linejoin="round"/>
<path d="M631.0,336.0 C639.3,328.5 658.3,302.5 681.0,291.0 C703.7,279.5 737.0,274.5 767.0,267.0 C797.0,259.5 833.0,252.5 861.0,246.0 C889.0,239.5 922.7,231.0 935.0,228.0" fill="none" stroke="#ffffff" stroke-width="4" stroke-linecap="round" stroke-linejoin="round"/>
<path d="M575.0,-2.0 C574.7,15.0 573.5,65.7 573.0,100.0 C572.5,134.3 575.0,176.8 572.0,204.0 C569.0,231.2 562.8,245.8 555.0,263.0 C547.2,280.2 531.0,292.3 525.0,307.0 C519.0,321.7 519.8,327.2 519.0,351.0 C518.2,374.8 519.5,404.8 520.0,450.0 C520.5,495.2 521.7,593.3 522.0,622.0" fill="none" stroke="#ffffff" stroke-width="6" stroke-linecap="round" stroke-linejoin="round"/>
<path d="M461.6,68.1 C465.8,68.9 475.9,73.5 486.8,73.1 C497.7,72.7 516.7,67.2 527.2,65.5 C537.7,63.8 543.2,60.0 549.9,63.0 C556.6,66.0 562.9,76.9 567.5,83.2 C572.1,89.5 575.9,97.9 577.6,100.8" fill="none" stroke="#ffffff" stroke-width="3.5" stroke-linecap="round" stroke-linejoin="round"/>
<path d="M418.8,45.4 C421.7,48.3 429.3,59.2 436.4,63.0 C443.5,66.8 457.4,67.2 461.6,68.1" fill="none" stroke="#ffffff" stroke-width="3.5" stroke-linecap="round" stroke-linejoin="round"/>
<path d="M577.6,22.7 C580.5,24.4 590.6,28.2 595.2,32.8 C599.8,37.4 601.5,47.0 605.3,50.4 C609.1,53.8 612.8,55.4 617.9,52.9 C623.0,50.4 628.5,42.8 635.6,35.3 C642.8,27.7 647.8,11.8 660.8,7.6 C673.8,3.4 696.5,11.4 713.7,10.1 C730.9,8.8 755.7,1.7 764.1,0.0" fill="none" stroke="#ffffff" stroke-width="4.5" stroke-linecap="round" stroke-linejoin="round"/>
<path d="M575.1,93.3 C579.7,94.5 598.6,96.6 602.8,100.8 C607.0,105.0 604.5,112.6 600.3,118.5 C596.1,124.4 581.0,130.7 577.6,136.1 C574.2,141.5 579.7,148.7 580.1,151.2" fill="none" stroke="#ffffff" stroke-width="3" stroke-linecap="round" stroke-linejoin="round"/>
<path d="M466.7,171.4 C467.5,174.8 470.4,182.3 471.7,191.6 C472.9,200.8 475.0,216.8 474.2,226.9 C473.4,237.0 467.9,243.7 466.7,252.1 C465.4,260.5 465.4,264.7 466.7,277.3 C467.9,289.9 472.9,319.3 474.2,327.7" fill="none" stroke="#ffffff" stroke-width="3" stroke-linecap="round" stroke-linejoin="round"/>
<path d="M628.0,121.0 C633.0,120.6 652.3,115.1 658.2,118.5 C664.1,121.9 659.9,133.6 663.3,141.2 C666.7,148.8 675.9,160.1 678.4,163.9" fill="none" stroke="#ffffff" stroke-width="3" stroke-linecap="round" stroke-linejoin="round"/>
<path d="M628.0,148.7 C629.7,150.8 632.2,157.5 638.1,161.3 C644.0,165.1 656.6,171.0 663.3,171.4 C670.0,171.8 675.9,165.2 678.4,163.9" fill="none" stroke="#ffffff" stroke-width="2.5" stroke-linecap="round" stroke-linejoin="round"/>
<path d="M713.7,15.1 C717.9,21.0 729.6,41.6 738.9,50.4 C748.1,59.2 756.6,62.6 769.2,68.1 C781.8,73.6 798.5,77.8 814.5,83.2 C830.5,88.7 852.4,98.7 865.0,100.8 C877.6,102.9 881.8,94.9 890.2,95.8 C898.6,96.7 907.0,105.1 915.4,105.9 C923.8,106.7 932.2,105.0 940.6,100.8 C949.0,96.6 958.2,84.9 965.8,80.7 C973.3,76.5 982.5,76.4 985.9,75.6" fill="none" stroke="#ffffff" stroke-width="4.5" stroke-linecap="round" stroke-linejoin="round"/>
<path d="M721.3,75.6 L779.2,5.0" fill="none" stroke="#ffffff" stroke-width="3.5" stroke-linecap="round" stroke-linejoin="round"/>
<path d="M738.9,83.2 L799.4,7.6" fill="none" stroke="#ffffff" stroke-width="3.5" stroke-linecap="round" stroke-linejoin="round"/>
<path d="M756.6,93.3 L819.6,20.2" fill="none" stroke="#ffffff" stroke-width="3.5" stroke-linecap="round" stroke-linejoin="round"/>
<path d="M774.2,105.9 L834.7,30.2" fill="none" stroke="#ffffff" stroke-width="3.5" stroke-linecap="round" stroke-linejoin="round"/>
<path d="M713.7,15.1 L865.0,42.9" fill="none" stroke="#ffffff" stroke-width="3.5" stroke-linecap="round" stroke-linejoin="round"/>
<path d="M726.3,63.0 L827.1,68.1" fill="none" stroke="#ffffff" stroke-width="2.5" stroke-linecap="round" stroke-linejoin="round"/>
<path d="M789.3,2.5 C801.9,9.2 848.2,32.8 865.0,42.9 C881.8,53.0 881.8,56.3 890.2,63.0 C898.6,69.7 911.2,79.8 915.4,83.2" fill="none" stroke="#ffffff" stroke-width="4" stroke-linecap="round" stroke-linejoin="round"/>
<path d="M696.1,105.9 C695.2,110.5 688.5,126.5 691.0,133.6 C693.5,140.7 704.1,149.1 711.2,148.7 C718.4,148.3 727.6,139.1 733.9,131.1 C740.2,123.1 745.6,110.0 749.0,100.8 C752.4,91.5 753.2,79.8 754.0,75.6" fill="none" stroke="#ffffff" stroke-width="3" stroke-linecap="round" stroke-linejoin="round"/>
<path d="M711.2,156.3 C711.6,161.8 712.5,181.5 713.7,189.1 C715.0,196.7 715.3,198.3 718.7,201.7 C722.1,205.0 731.4,207.9 733.9,209.2" fill="none" stroke="#ffffff" stroke-width="3" stroke-linecap="round" stroke-linejoin="round"/>
<path d="M807.0,121.0 L781.8,173.9" fill="none" stroke="#ffffff" stroke-width="2.5" stroke-linecap="round" stroke-linejoin="round"/>
<path d="M814.5,121.0 L819.6,201.7" fill="none" stroke="#ffffff" stroke-width="2.5" stroke-linecap="round" stroke-linejoin="round"/>
<path d="M832.2,126.0 L849.8,206.7" fill="none" stroke="#ffffff" stroke-width="2.5" stroke-linecap="round" stroke-linejoin="round"/>
<path d="M839.7,126.0 C845.2,130.2 860.3,140.7 872.5,151.2 C884.7,161.7 906.1,182.8 912.8,189.1" fill="none" stroke="#ffffff" stroke-width="2.5" stroke-linecap="round" stroke-linejoin="round"/>
<path d="M885.1,113.4 C890.1,113.8 904.0,113.0 915.4,116.0 C926.8,119.0 946.1,126.5 953.2,131.1 C960.3,135.7 957.4,141.6 958.2,143.7" fill="none" stroke="#ffffff" stroke-width="3" stroke-linecap="round" stroke-linejoin="round"/>
<path d="M865.0,45.4 C867.5,51.7 876.8,70.6 880.1,83.2 C883.5,95.8 884.3,114.7 885.1,121.0" fill="none" stroke="#ffffff" stroke-width="4" stroke-linecap="round" stroke-linejoin="round"/>
<path d="M834.7,37.8 C837.6,36.5 846.0,31.5 852.3,30.2 C858.6,28.9 869.1,30.2 872.5,30.2" fill="none" stroke="#ffffff" stroke-width="2.5" stroke-linecap="round" stroke-linejoin="round"/>
<path d="M890.2,10.1 C894.4,10.1 912.9,3.4 915.4,10.1 C917.9,16.8 907.0,43.7 905.3,50.4" fill="none" stroke="#ffffff" stroke-width="2.5" stroke-linecap="round" stroke-linejoin="round"/>
<path d="M499.4,10.1 C504.0,9.7 520.9,3.8 527.2,7.6 C533.5,11.4 531.3,27.8 537.2,32.8 C543.1,37.8 558.3,37.0 562.5,37.8" fill="none" stroke="#ffffff" stroke-width="2.5" stroke-linecap="round" stroke-linejoin="round"/>
<path d="M504.5,30.2 L507.0,60.5" fill="none" stroke="#ffffff" stroke-width="2.5" stroke-linecap="round" stroke-linejoin="round"/>
<path d="M391.0,171.4 C394.4,173.1 403.6,176.4 411.2,181.5 C418.8,186.6 430.5,194.1 436.4,201.7 C442.3,209.3 444.8,222.7 446.5,226.9" fill="none" stroke="#ffffff" stroke-width="2.5" stroke-linecap="round" stroke-linejoin="round"/>
<path d="M386.0,191.6 C391.0,191.6 406.9,187.8 416.2,191.6 C425.4,195.4 437.3,210.5 441.5,214.3" fill="none" stroke="#ffffff" stroke-width="2.5" stroke-linecap="round" stroke-linejoin="round"/>
<path d="M-4.0,501.0 C46.7,498.3 183.3,491.6 300.0,485.0 C416.7,478.4 623.3,466.5 696.0,461.5 C768.7,456.5 692.6,459.6 736.0,455.0 C779.4,450.4 895.8,440.3 956.6,434.0 C1017.4,427.7 1053.9,423.8 1101.0,417.0 C1148.1,410.2 1194.7,401.0 1239.0,393.0 C1283.3,385.0 1345.7,373.0 1367.0,369.0" fill="none" stroke="#ffffff" stroke-width="6" stroke-linecap="round" stroke-linejoin="round"/>
<path d="M-4.0,670.0 C49.5,667.7 228.8,660.8 317.0,656.0 C405.2,651.2 455.2,648.2 525.0,641.0 C594.8,633.8 683.7,620.5 736.0,613.0 C788.3,605.5 798.8,602.3 839.0,596.0 C879.2,589.7 929.3,582.5 977.0,575.0 C1024.7,567.5 1075.5,559.5 1125.0,551.0 C1174.5,542.5 1233.7,530.8 1274.0,524.0 C1314.3,517.2 1351.5,512.3 1367.0,510.0" fill="none" stroke="#ffffff" stroke-width="6" stroke-linecap="round" stroke-linejoin="round"/>
<path d="M-4.0,829.0 C69.5,824.7 320.3,808.8 437.0,803.0 C553.7,797.2 627.2,796.2 696.0,794.0 C764.8,791.8 799.3,794.8 850.0,790.0 C900.7,785.2 914.0,778.0 1000.0,765.0 C1086.0,752.0 1305.0,720.8 1366.0,712.0" fill="none" stroke="#ffffff" stroke-width="6" stroke-linecap="round" stroke-linejoin="round"/>
<path d="M686.0,375.0 C731.4,371.6 845.4,369.1 958.5,354.6 C1071.6,340.1 1296.8,299.1 1364.5,288.0" fill="none" stroke="#ffffff" stroke-width="5" stroke-linecap="round" stroke-linejoin="round"/>
<path d="M976.0,79.0 L1364.5,15.4" fill="none" stroke="#ffffff" stroke-width="6" stroke-linecap="round" stroke-linejoin="round"/>
<path d="M918.0,-2.0 L1005.0,70.5" fill="none" stroke="#ffffff" stroke-width="7" stroke-linecap="round" stroke-linejoin="round"/>
<path d="M958.5,-2.0 C960.9,35.7 970.1,149.2 973.0,224.0 C975.9,298.8 975.3,386.2 976.0,447.0 C976.7,507.8 973.3,542.3 977.0,589.0 C980.7,635.7 992.2,677.8 998.0,727.0 C1003.8,776.2 1009.4,857.8 1011.7,884.0" fill="none" stroke="#ffffff" stroke-width="5" stroke-linecap="round" stroke-linejoin="round"/>
<path d="M1150.0,-2.0 C1154.8,31.8 1169.3,126.1 1179.0,201.0 C1188.7,275.9 1203.2,406.3 1208.0,447.4" fill="none" stroke="#ffffff" stroke-width="5" stroke-linecap="round" stroke-linejoin="round"/>
<path d="M1091.0,348.0 C1094.4,371.0 1104.1,440.0 1111.6,486.0 C1119.1,532.0 1129.5,586.7 1135.8,624.0 C1142.1,661.3 1143.9,666.7 1149.6,710.0 C1155.3,753.3 1166.6,855.0 1170.0,884.0" fill="none" stroke="#ffffff" stroke-width="5" stroke-linecap="round" stroke-linejoin="round"/>
<path d="M1260.0,-2.0 C1265.8,31.8 1284.3,126.2 1295.0,201.0 C1305.7,275.8 1319.2,406.0 1324.0,447.0" fill="none" stroke="#ffffff" stroke-width="4.5" stroke-linecap="round" stroke-linejoin="round"/>
<path d="M1232.0,348.0 C1235.5,365.2 1245.5,410.8 1253.0,451.0 C1260.5,491.2 1269.0,543.0 1277.0,589.0 C1285.0,635.0 1293.8,677.8 1301.0,727.0 C1308.2,776.2 1316.8,857.8 1320.0,884.0" fill="none" stroke="#ffffff" stroke-width="4.5" stroke-linecap="round" stroke-linejoin="round"/>
<path d="M846.0,617.0 C848.3,646.8 855.3,751.5 860.0,796.0 C864.7,840.5 871.7,869.3 874.0,884.0" fill="none" stroke="#ffffff" stroke-width="5" stroke-linecap="round" stroke-linejoin="round"/>
<path d="M1367.0,686.0 L1177.0,884.0" fill="none" stroke="#ffffff" stroke-width="7" stroke-linecap="round" stroke-linejoin="round"/>
<path d="M763.0,264.0 C763.3,295.0 763.8,390.3 765.0,450.0 C766.2,509.7 769.2,593.3 770.0,622.0" fill="none" stroke="#ffffff" stroke-width="5" stroke-linecap="round" stroke-linejoin="round"/>
<path d="M307.8,438.0 L310.0,660.0" fill="none" stroke="#ffffff" stroke-width="5" stroke-linecap="round" stroke-linejoin="round"/>
<path d="M0.0,764.0 C19.0,756.7 80.3,732.7 114.0,720.0 C147.7,707.3 177.5,692.8 202.0,688.0 C226.5,683.2 243.8,687.7 261.0,691.0 C278.2,694.3 290.3,706.0 305.0,708.0 C319.7,710.0 331.8,707.3 349.0,703.0 C366.2,698.7 383.5,688.0 408.0,682.0 C432.5,676.0 474.0,665.5 496.0,667.0 C518.0,668.5 522.8,692.3 540.0,691.0 C557.2,689.7 573.0,666.8 599.0,659.0 C625.0,651.2 669.2,647.2 696.0,644.0 C722.8,640.8 734.3,640.7 760.0,640.0 C785.7,639.3 835.0,640.0 850.0,640.0" fill="none" stroke="#ffffff" stroke-width="5" stroke-linecap="round" stroke-linejoin="round"/>
<path d="M25.0,826.0 C34.8,821.7 59.5,805.3 84.0,800.0 C108.5,794.7 142.5,795.5 172.0,794.0 C201.5,792.5 241.3,794.0 261.0,791.0 C280.7,788.0 275.3,777.0 290.0,776.0 C304.7,775.0 327.0,781.5 349.0,785.0 C371.0,788.5 397.5,798.5 422.0,797.0 C446.5,795.5 478.8,786.8 496.0,776.0 C513.2,765.2 510.3,740.3 525.0,732.0 C539.7,723.7 566.8,722.0 584.0,726.0 C601.2,730.0 620.7,745.2 628.0,756.0 C635.3,766.8 628.0,785.2 628.0,791.0" fill="none" stroke="#ffffff" stroke-width="5" stroke-linecap="round" stroke-linejoin="round"/>
<path d="M317.0,656.0 C324.8,658.3 349.8,664.7 364.0,670.0 C378.2,675.3 393.2,677.7 402.0,688.0 C410.8,698.3 412.2,717.3 417.0,732.0 C421.8,746.7 427.7,759.8 431.0,776.0 C434.3,792.2 435.5,811.0 437.0,829.0 C438.5,847.0 439.5,874.8 440.0,884.0" fill="none" stroke="#ffffff" stroke-width="6" stroke-linecap="round" stroke-linejoin="round"/>
<path d="M0.0,700.0 C10.0,698.3 45.0,695.0 60.0,690.0 C75.0,685.0 81.7,673.0 90.0,670.0 C98.3,667.0 106.7,671.7 110.0,672.0" fill="none" stroke="#ffffff" stroke-width="4" stroke-linecap="round" stroke-linejoin="round"/>
<path d="M696.0,644.0 C700.0,651.7 709.3,677.3 720.0,690.0 C730.7,702.7 746.7,708.3 760.0,720.0 C773.3,731.7 785.0,748.3 800.0,760.0 C815.0,771.7 841.7,785.0 850.0,790.0" fill="none" stroke="#ffffff" stroke-width="4" stroke-linecap="round" stroke-linejoin="round"/>
<path d="M720.0,700.0 C713.3,710.0 693.3,745.0 680.0,760.0 C666.7,775.0 646.7,785.0 640.0,790.0" fill="none" stroke="#ffffff" stroke-width="3" stroke-linecap="round" stroke-linejoin="round"/>
<path d="M35.3,363.7 C37.8,367.4 42.8,377.5 50.4,385.6 C58.0,393.7 69.5,405.8 80.7,412.5 C91.9,419.2 108.6,421.4 117.6,425.9 C126.6,430.4 131.1,435.1 134.5,439.3 C137.9,443.5 137.0,442.6 137.8,451.0 C138.6,459.4 139.2,483.2 139.5,489.7" fill="none" stroke="#ffffff" stroke-width="5" stroke-linecap="round" stroke-linejoin="round"/>
<path d="M430.0,720.0 C435.8,710.0 455.0,700.8 470.0,700.0 C485.0,699.2 503.3,714.2 520.0,715.0 C536.7,715.8 568.3,700.8 570.0,705.0 C571.7,709.2 540.0,729.2 530.0,740.0 C520.0,750.8 521.7,765.0 510.0,770.0 C498.3,775.0 472.5,771.7 460.0,770.0 C447.5,768.3 440.0,768.3 435.0,760.0 C430.0,751.7 424.2,730.0 430.0,720.0 Z" fill="#cfcfcf"/>
<ellipse cx="478" cy="738" rx="28" ry="20" fill="#e7e7e7"/>
<path d="M120,680 Q150,668 180,672 Q170,692 140,700 Q118,695 120,680Z" fill="#d3d3d3"/>
<path d="M345,700 Q360,690 372,692 Q362,708 350,710Z" fill="#d3d3d3"/>
<path d="M345,770 Q360,758 372,757 Q362,775 345,776Z" fill="#d3d3d3"/>
<g transform="rotate(-20 168 752)"><rect x="120" y="726" width="96" height="52" rx="26" fill="none" stroke="#dcdcdc" stroke-width="2"/><rect x="140" y="738" width="56" height="28" fill="#d9d9d9"/><path d="M154,738 v28 M168,738 v28 M182,738 v28 M140,752 h56" stroke="#e6e6e6" stroke-width="1.5"/></g>
<path d="M0,690 Q20,700 25,730 Q20,745 10,740 Q5,720 0,715Z" fill="#d3d3d3"/>
<path d="M40,762 Q55,765 60,780 Q68,792 64,795 Q50,785 42,775Z" fill="#d3d3d3"/>
<path d="M270,783 Q290,775 300,780 Q290,795 268,795Z" fill="#d3d3d3"/>
<path d="M531,300 Q548,285 552,305 Q565,318 568,322 L531,324Z" fill="#d0d0d0"/>
<text x="236" y="307" font-size="21" fill="#7a7a7a" text-anchor="start">Seacliff</text>
<text x="647" y="314.5" font-size="21" fill="#7a7a7a" text-anchor="start">Presidio Terrace</text>
<text x="1097" y="215" font-size="21" fill="#7a7a7a" text-anchor="start">Pacific Heights</text>
<text x="519" y="468" font-size="21" fill="#7a7a7a" text-anchor="middle">Richmond</text>
<text x="519" y="496" font-size="21" fill="#7a7a7a" text-anchor="middle">District</text>
<text x="954" y="531" font-size="21" fill="#7a7a7a" text-anchor="start">North of Panhandle</text>
<text x="895" y="716" font-size="21" fill="#7a7a7a" text-anchor="start">Haight-Ashbury</text>
<text x="634" y="80" font-size="13.3" font-weight="bold" fill="#7a7a7a" text-anchor="start">Presidio</text>
<text x="297" y="728" font-size="13.3" font-weight="bold" fill="#7a7a7a" text-anchor="start">Golden Gate Park</text>
<text x="198" y="529" font-size="13.3" font-weight="bold" fill="#7a7a7a" text-anchor="middle">George Washington</text>
<text x="198" y="545" font-size="13.3" font-weight="bold" fill="#7a7a7a" text-anchor="middle">High School</text>
<text x="1101" y="825" font-size="13.3" font-weight="bold" fill="#7a7a7a" text-anchor="middle">Corona Heights</text>
<text x="1101" y="841" font-size="13.3" font-weight="bold" fill="#7a7a7a" text-anchor="middle">Park</text>
<text x="3" y="406" font-size="13.3" font-weight="bold" fill="#7a7a7a" text-anchor="start">End</text>
<text x="275" y="406" font-size="13" fill="#7a7a7a" text-anchor="start" transform="rotate(-3 275 406)">CALIFORNIA ST</text>
<text x="802" y="318" font-size="13" fill="#7a7a7a" text-anchor="start" transform="rotate(-8 802 318)">CLAY ST</text>
<text x="915" y="278" font-size="13" fill="#7a7a7a" text-anchor="start" transform="rotate(-8 915 278)">WASHINGTON ST</text>
<text x="1002" y="290" font-size="13" fill="#7a7a7a" text-anchor="start" transform="rotate(-8 1002 290)">CLAY ST</text>
<text x="1083" y="106" font-size="13" fill="#7a7a7a" text-anchor="start" transform="rotate(-8 1083 106)">FILBERT ST</text>
<text x="1257" y="76" font-size="13" fill="#7a7a7a" text-anchor="start" transform="rotate(-8 1257 76)">FILBERT ST</text>
<text x="1296" y="450" font-size="13" fill="#7a7a7a" text-anchor="start" transform="rotate(-8 1296 450)">EDDY ST</text>
<text x="1150" y="474" font-size="13" fill="#7a7a7a" text-anchor="start" transform="rotate(-8 1150 474)">EDDY ST</text>
<text x="1085" y="135" font-size="13" fill="#7a7a7a" text-anchor="start" transform="rotate(78 1085 135)">SCOTT ST</text>
<text x="1113" y="320" font-size="13" fill="#7a7a7a" text-anchor="start" transform="rotate(78 1113 320)">SCOTT ST</text>
<text x="192" y="792" font-size="13" fill="#7a7a7a" text-anchor="start" transform="rotate(-25 192 792)">MIDDLE DR W</text>
<text x="0" y="0" font-size="13" fill="#7a7a7a" transform="translate(256,442) rotate(87)">27TH AVE</text>
<text x="0" y="0" font-size="13" fill="#7a7a7a" transform="translate(276,446) rotate(87)">26TH AVE</text>
<text x="1356" y="450" font-size="21" fill="#7a7a7a" text-anchor="start">S</text>
<text x="1334" y="846" font-size="13" fill="#7a7a7a" text-anchor="start" transform="rotate(82 1334 846)">S ST</text>
<ellipse cx="701.4000000000001" cy="568" rx="18" ry="6" transform="rotate(-22 701.4000000000001 568)" fill="#000" opacity="0.55" filter="url(#sh)"/>
<path d="M668.2,553.0 A22.5,22.5 0 1 1 702.6,553.0 L685.4000000000001,577 Z" fill="#fdc690" stroke="#f9bd82" stroke-width="1"/>
<ellipse cx="1200.8000000000002" cy="469" rx="18" ry="6" transform="rotate(-22 1200.8000000000002 469)" fill="#000" opacity="0.55" filter="url(#sh)"/>
<path d="M1167.6,455.0 A22.5,22.5 0 1 1 1202.0,455.0 L1184.8000000000002,478 Z" fill="#fdc690" stroke="#f9bd82" stroke-width="1"/>
</svg>
<div class="a ctl" style="left:1080px;top:766px;width:38px;height:78px"></div>
<div class="a" style="left:1080px;top:804px;width:38px;height:2px;background:#ccc"></div>
<div class="a ctl" style="left:1080px;top:860px;width:38px;height:38px"></div>
<div class="a ctl" style="left:1080px;top:914px;width:38px;height:38px"></div>
<div class="a ctl" style="left:2376px;top:766px;width:40px;height:40px"></div>
<svg class="a" style="left:1080px;top:766px" width="38" height="78"><path d="M12,22.5 h14 M19,15.5 v14" stroke="#111" stroke-width="3.2"/><path d="M13,61 h12" stroke="#111" stroke-width="3.2"/></svg>
<svg class="a" style="left:1080px;top:860px" width="38" height="38"><path d="M30,8 L7,18 Q5,20 8,21 L17,21.5 L18.5,31 Q20,33 21.5,31 Z" fill="#444" stroke="#444" stroke-width="2" stroke-linejoin="round"/></svg>
<svg class="a" style="left:1080px;top:914px" width="38" height="38"><path d="M5,19 L19,8 L33,19" fill="none" stroke="#444" stroke-width="2.6" stroke-linecap="round"/><path d="M28,14 V8 h-3 V12" fill="#444" stroke="#444" stroke-width="1.5"/><path d="M10,22 L19,14.5 L28,22 V30 h-6 v-6 h-6 v6 h-6z" fill="#444"/></svg>
<svg class="a" style="left:2376px;top:766px" width="40" height="40"><circle cx="17.5" cy="16.5" r="5.5" fill="none" stroke="#222" stroke-width="2.6"/><path d="M21.5,20.5 L27,26.5" stroke="#222" stroke-width="3" stroke-linecap="round"/></svg>
<div class="a" style="left:2280px;top:1548px;width:206px;height:68px;border-radius:34px;background:#78a51f"></div>
<svg class="a" style="left:2312px;top:1565px" width="30" height="30" viewBox="0 0 30 30"><path d="M7.5,24.5 Q4,20 4,14.5 A11,11 0 1 1 13,25.4 Q10,26 5.5,27.5 Q7,26 7.5,24.5z" fill="none" stroke="#2b3a0f" stroke-width="3.2" stroke-linejoin="round"/></svg>
<div class="t " style="left:2355.0px;top:1569.7px;font-size:24px;line-height:24px;color:#2b3a0f;letter-spacing:0.8px"><b>Support</b></div>
</body></html>
